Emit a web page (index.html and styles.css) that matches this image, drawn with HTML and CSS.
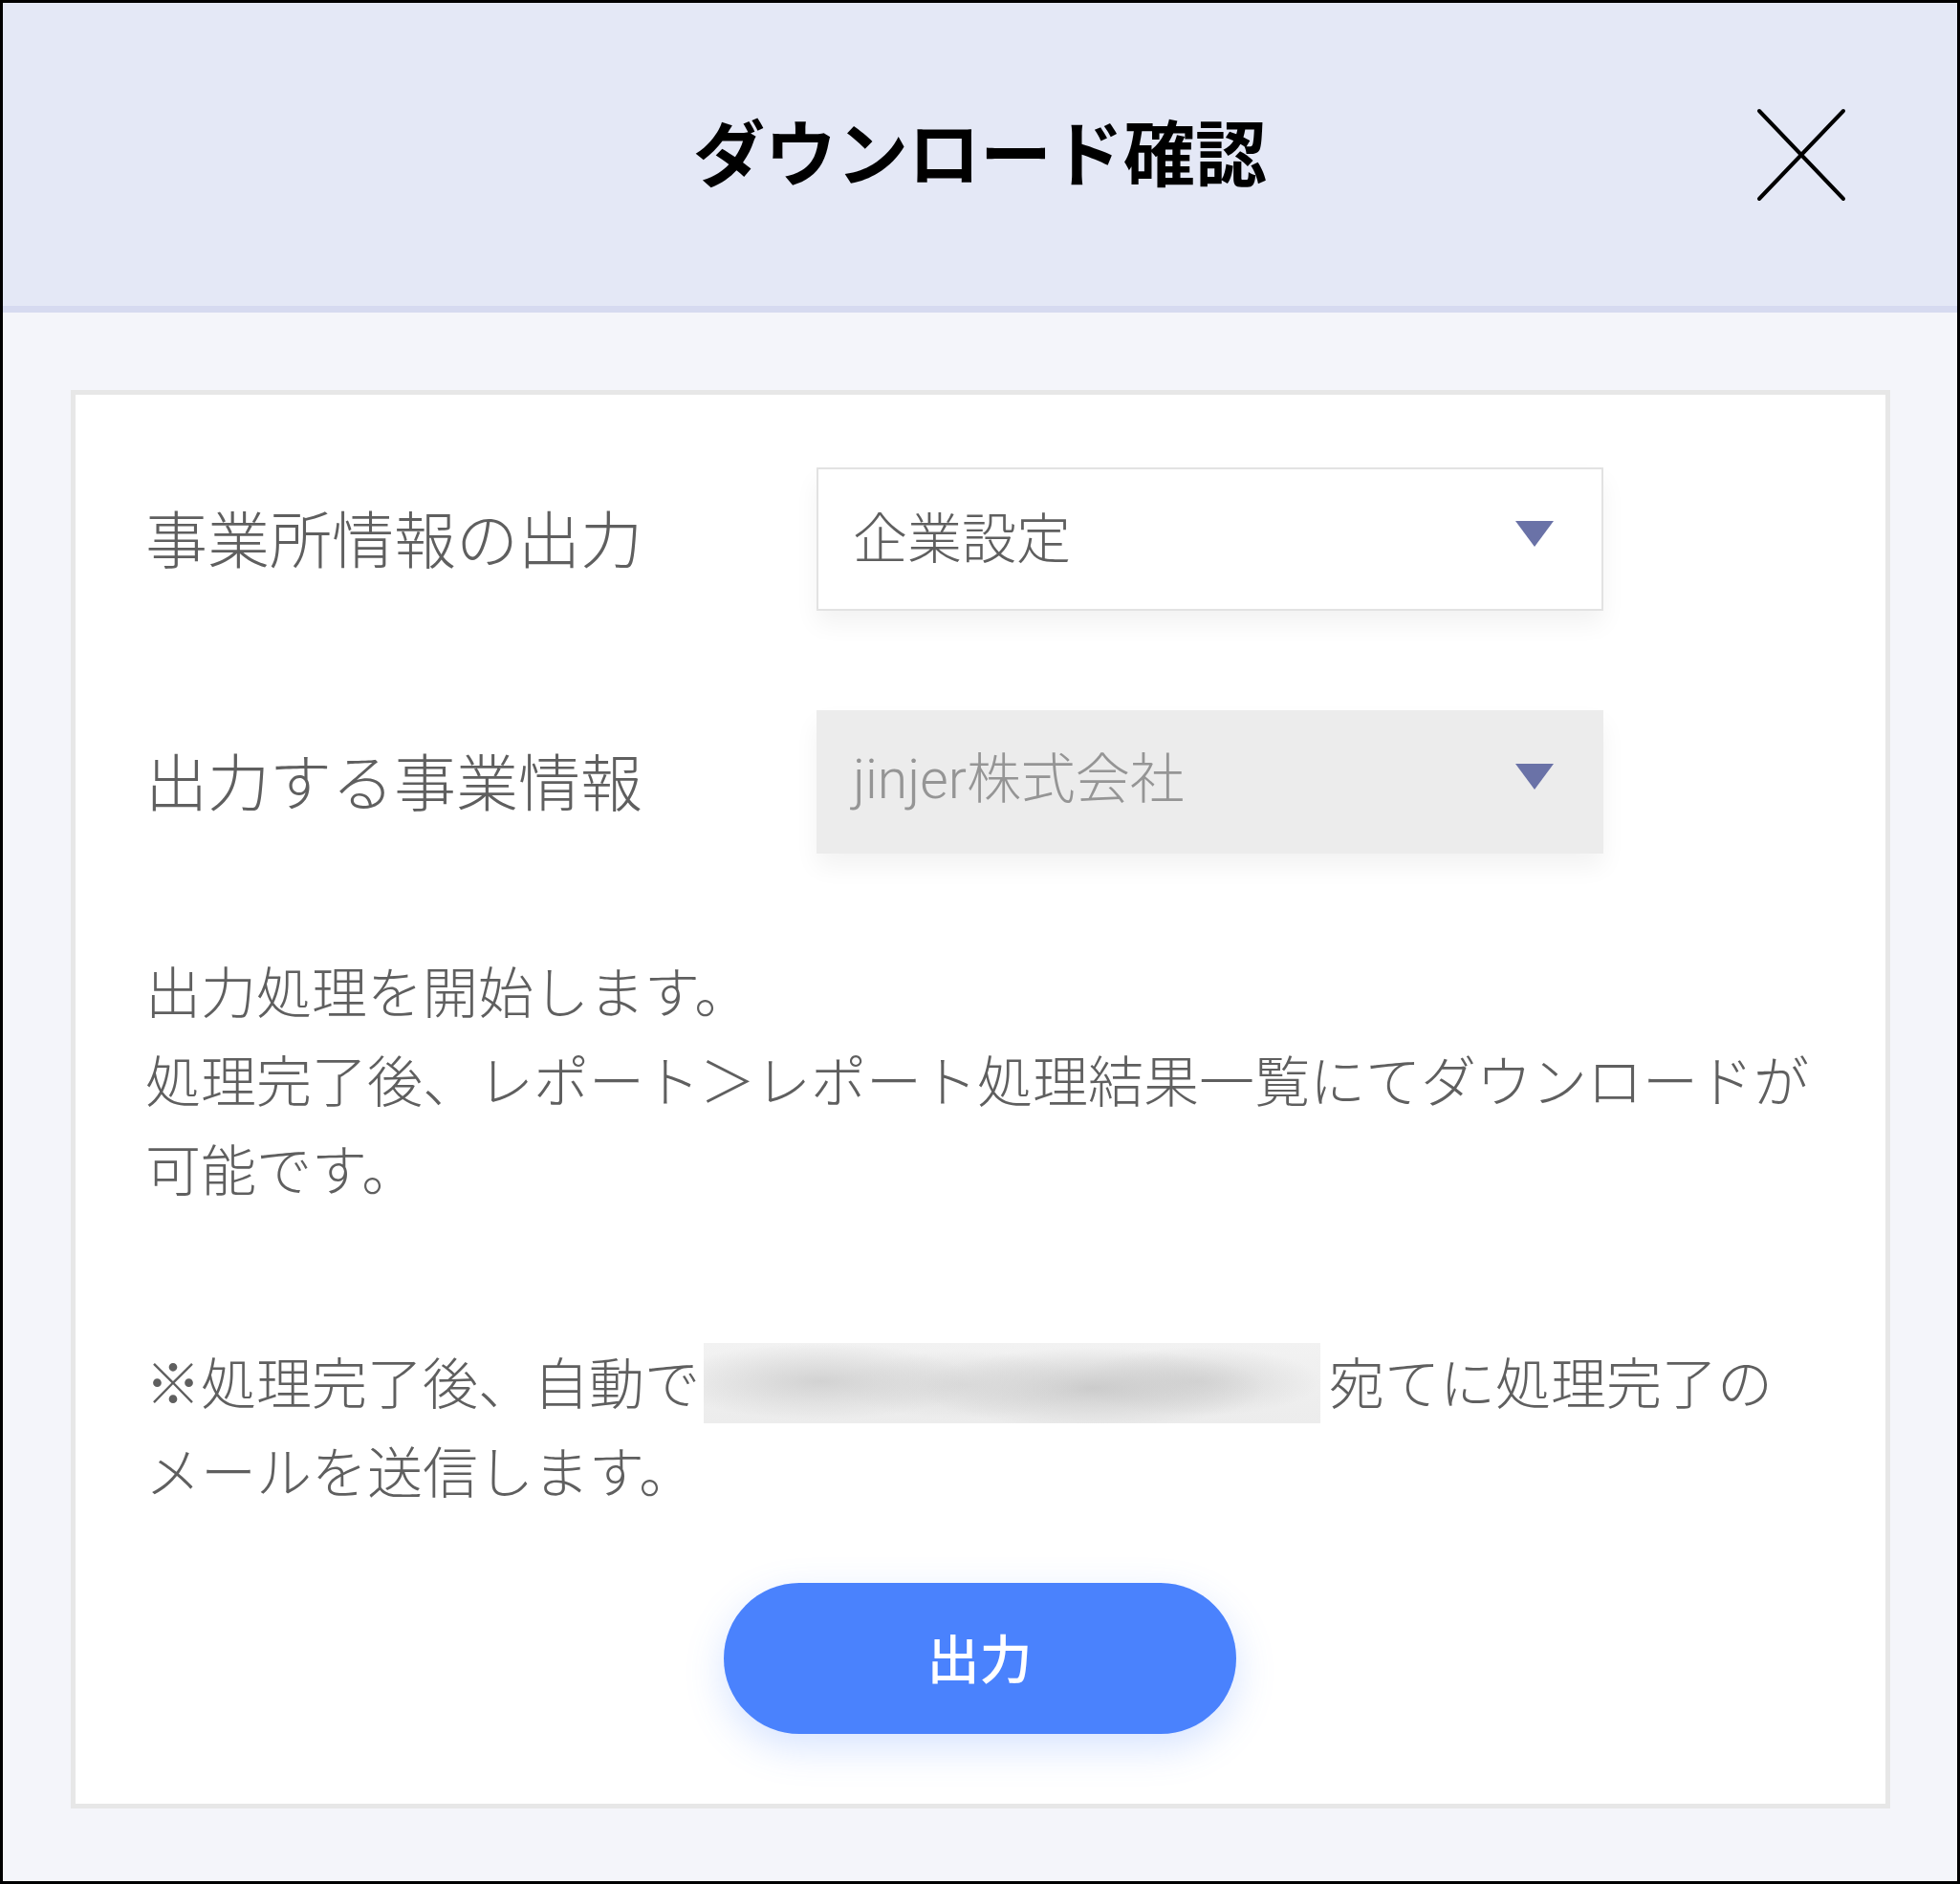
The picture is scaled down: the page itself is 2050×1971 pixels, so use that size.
FILE: index.html
```html
<!DOCTYPE html>
<html lang="ja">
<head>
<meta charset="utf-8">
<title>ダウンロード確認</title>
<link rel="stylesheet" href="styles.css">
</head>
<body>
<div class="dialog">
  <header class="dialog-header">
    <span class="header-spacer"></span>
    <h1 class="dialog-title">ダウンロード確認</h1>
    <button class="close-btn" type="button" aria-label="閉じる">
      <svg width="96" height="100" viewBox="0 0 96 100" aria-hidden="true">
        <line x1="4" y1="4" x2="92" y2="96" stroke="#000" stroke-width="4" stroke-linecap="round"/>
        <line x1="92" y1="4" x2="4" y2="96" stroke="#000" stroke-width="4" stroke-linecap="round"/>
      </svg>
    </button>
  </header>
  <main class="dialog-body">
    <section class="card">
      <div class="form-row">
        <span class="field-label">事業所情報の出力</span>
        <div class="select">
          <span class="select-text">企業設定</span>
          <span class="select-arrow"></span>
        </div>
      </div>
      <div class="form-row form-row-second">
        <span class="field-label">出力する事業情報</span>
        <div class="select select-disabled">
          <span class="select-text"><span class="latin">jinjer</span>株式会社</span>
          <span class="select-arrow"></span>
        </div>
      </div>
      <p class="message">出力処理を開始します。<br>処理完了後、レポート＞レポート処理結果一覧にてダウンロードが<br>可能です。</p>
      <p class="note">※処理完了後、自動で<span class="masked"></span>宛てに処理完了の<br>メールを送信します。</p>
      <div class="actions">
        <button class="primary-btn" type="button">出力</button>
      </div>
    </section>
  </main>
</div>
</body>
</html>
```

FILE: styles.css
```css
html, body {
  margin: 0;
  padding: 0;
  background: #ffffff;
}

body {
  font-family: "Noto Sans CJK JP", "Noto Sans", "Liberation Sans", sans-serif;
  font-weight: 300;
  color: #5f5f5f;
}

.dialog {
  box-sizing: border-box;
  width: 2050px;
  height: 1971px;
  border: 3px solid #000000;
  display: flex;
  flex-direction: column;
  background: #f4f5fa;
}

.dialog-header {
  box-sizing: border-box;
  height: 324px;
  background: #e4e8f6;
  border-bottom: 7px solid #d6daf0;
  display: grid;
  grid-template-columns: 1fr auto 1fr;
  align-items: center;
}

.dialog-title {
  margin: 0 0 10px 0;
  font-size: 75px;
  font-weight: 700;
  color: #000000;
  line-height: 1.2;
  white-space: nowrap;
}

.close-btn {
  justify-self: end;
  margin-right: 115px;
  padding: 0;
  border: none;
  background: transparent;
  width: 96px;
  height: 100px;
  display: flex;
  align-items: center;
  justify-content: center;
  cursor: pointer;
}

.close-btn svg {
  display: block;
}

.dialog-body {
  flex: 1;
  padding: 81px 70px 76px 71px;
  display: flex;
  flex-direction: column;
}

.card {
  flex: 1;
  background: #ffffff;
  border: 5px solid #e7e7e7;
  padding: 76px 75px 72px 73px;
  display: flex;
  flex-direction: column;
}

.form-row {
  display: flex;
  align-items: center;
  height: 150px;
}

.form-row-second {
  margin-top: 104px;
}

.field-label {
  width: 702px;
  flex: none;
  font-size: 65px;
  color: #5f5f5f;
  white-space: nowrap;
  line-height: 1;
  margin-top: -6px;
}

.select {
  box-sizing: border-box;
  width: 823px;
  height: 150px;
  border: 2px solid #e2e2e2;
  background: #ffffff;
  display: flex;
  align-items: center;
  justify-content: space-between;
  padding: 0 50px 0 36px;
  box-shadow: 0 14px 24px rgba(0, 0, 0, 0.05);
}

.select-disabled {
  border-color: #ececec;
  background: #ececec;
}

.select-text {
  font-size: 57px;
  color: #5f5f5f;
  line-height: 1;
  margin-top: -10px;
  white-space: nowrap;
}

.select-disabled .select-text {
  color: #959595;
}

.latin {
  font-family: Roboto, "Liberation Sans", sans-serif;
  font-weight: 300;
}

.select-arrow {
  width: 0;
  height: 0;
  border-left: 20px solid transparent;
  border-right: 20px solid transparent;
  border-top: 27px solid #6a72a7;
  margin-top: -12px;
}

.message {
  margin: 96px 0 0 0;
  font-size: 58px;
  line-height: 93px;
  color: #5f5f5f;
  white-space: nowrap;
}

.note {
  margin: 130px 0 0 0;
  font-size: 58px;
  line-height: 93px;
  color: #5f5f5f;
  white-space: nowrap;
}

.masked {
  display: inline-block;
  width: 645px;
  height: 84px;
  margin: 0 9px 0 4px;
  vertical-align: -20px;
  background:
    radial-gradient(ellipse 160px 40px at 19% 48%, rgba(205, 205, 205, 0.85), rgba(205, 205, 205, 0)),
    radial-gradient(ellipse 130px 36px at 42% 52%, rgba(212, 212, 212, 0.7), rgba(212, 212, 212, 0)),
    radial-gradient(ellipse 180px 42px at 63% 56%, rgba(200, 200, 200, 0.9), rgba(200, 200, 200, 0)),
    radial-gradient(ellipse 130px 36px at 80% 48%, rgba(208, 208, 208, 0.8), rgba(208, 208, 208, 0)),
    linear-gradient(#f2f2f2, #ececec);
}

.actions {
  margin-top: 72px;
  display: flex;
  justify-content: center;
}

.primary-btn {
  width: 536px;
  height: 158px;
  border: none;
  border-radius: 79px;
  background: #4a82fd;
  color: #ffffff;
  font-family: "Noto Sans CJK JP", "Noto Sans", sans-serif;
  font-size: 55px;
  font-weight: 500;
  line-height: 1;
  padding: 0 0 6px 0;
  box-shadow: 0 14px 40px rgba(74, 130, 253, 0.22);
  cursor: pointer;
}
```
